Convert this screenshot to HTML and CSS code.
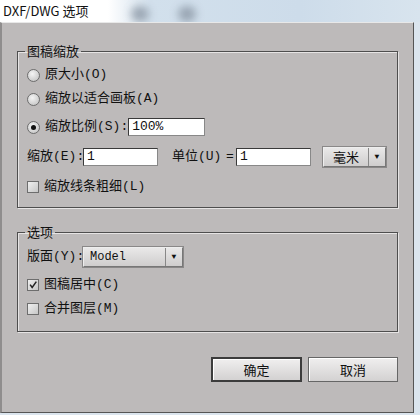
FILE: index.html
```html
<!DOCTYPE html>
<html lang="zh-CN">
<head>
    <meta charset="UTF-8" />
    <title>DXF/DWG 选项</title>
    <link rel="stylesheet" href="styles.css">
</head>
<body>
    <div class="window">
        <div class="titlebar">
            <span class="title">DXF/DWG 选项</span>
            <span class="blur blur-a"></span>
            <span class="blur blur-b"></span>
        </div>

        <div class="dialog">
            <fieldset class="group group-scale">
                <legend>图稿缩放</legend>

                <label class="row">
                    <span class="radio"></span>
                    <span>原大小(O)</span>
                </label>
                <label class="row">
                    <span class="radio"></span>
                    <span>缩放以适合画板(A)</span>
                </label>
                <label class="row row-gap">
                    <span class="radio checked"></span>
                    <span>缩放比例(S):</span>
                    <span class="field field-ratio">100%</span>
                </label>
                <div class="row row-gap-lg">
                    <span class="label-w">缩放(E):</span>
                    <span class="field field-num">1</span>
                    <span class="unit-label">单位(U)</span>
                    <span class="eq">=</span>
                    <span class="field field-num">1</span>
                    <span class="select select-unit">
                        <span class="select-text">毫米</span>
                        <span class="select-arrow">▼</span>
                    </span>
                </div>
                <label class="row row-gap-lg">
                    <span class="check"></span>
                    <span>缩放线条粗细(L)</span>
                </label>
            </fieldset>

            <fieldset class="group group-options">
                <legend>选项</legend>

                <div class="row">
                    <span class="label-w">版面(Y):</span>
                    <span class="select select-layout">
                        <span class="select-text mono">Model</span>
                        <span class="select-arrow">▼</span>
                    </span>
                </div>
                <label class="row row-gap">
                    <span class="check checked">
                        <svg width="12" height="12" viewBox="0 0 12 12">
                            <polyline points="2.5,5.5 5,9 10,2" fill="none" stroke="#222" stroke-width="1.8" />
                        </svg>
                    </span>
                    <span>图稿居中(C)</span>
                </label>
                <label class="row">
                    <span class="check"></span>
                    <span>合并图层(M)</span>
                </label>
            </fieldset>

            <div class="actions">
                <button class="btn btn-default">确定</button>
                <button class="btn">取消</button>
            </div>
        </div>
    </div>
</body>
</html>
```

FILE: styles.css
```css
:root {
    --face: #bdbaba;
    --line: #4e4e4e;
    --text: #111;
}

* {
    margin: 0;
    padding: 0;
    box-sizing: border-box;
}

body {
    width: 420px;
    height: 415px;
    overflow: hidden;
    background: #dbe5ee;
    font-family: "Liberation Mono", "Noto Sans CJK SC", monospace;
    font-size: 13px;
    color: var(--text);
}

.window {
    width: 420px;
    height: 415px;
    display: flex;
    flex-direction: column;
}

.titlebar {
    position: relative;
    height: 22px;
    display: flex;
    align-items: center;
    padding-left: 3px;
    background: linear-gradient(to right, #fff 0, #fff 108px, #d2e0ec 150px, #cddcea 300px, #d8e4ee 420px);
    overflow: hidden;
}

.title {
    font-family: "Noto Sans CJK SC", "Noto Sans", sans-serif;
    font-size: 13px;
    line-height: 16px;
    color: #111;
}

.blur {
    position: absolute;
    top: 6px;
    width: 18px;
    height: 16px;
    border-radius: 50%;
    background: #8a96a4;
    filter: blur(4px);
    opacity: 0.8;
}

.blur-a {
    left: 131px;
}

.blur-b {
    left: 178px;
}

.dialog {
    width: 414px;
    height: 391px;
    background: var(--face);
    border-left: 2px solid #8f8d8d;
    border-right: 1px solid #555;
    border-bottom: 1px solid #555;
    border-top: 1px solid #e8e8e8;
    padding: 21px 15px 0 15px;
    display: flex;
    flex-direction: column;
}

.group {
    border: 1px solid var(--line);
    box-shadow: 1px 1px 0 #e6e4e4, inset 1px 1px 0 #e6e4e4;
    padding: 5px 9px 8px 9px;
    display: flex;
    flex-direction: column;
}

.group legend {
    font-family: "Noto Sans CJK SC", sans-serif;
    font-size: 13px;
    line-height: 14px;
    padding: 0 2px;
    margin-left: -2px;
}

.group-options {
    margin-top: 17px;
    padding-top: 6px;
    padding-bottom: 10px;
}

.row {
    height: 24px;
    display: flex;
    align-items: center;
    gap: 5px;
    line-height: 16px;
    white-space: nowrap;
}

.row-gap {
    margin-top: 4px;
}

.row-gap-lg {
    margin-top: 6px;
}

.radio {
    width: 13px;
    height: 13px;
    border-radius: 50%;
    border: 1px solid #6d6d6d;
    background: radial-gradient(circle at 40% 35%, #f4f4f4, #c8c8c8 80%);
    display: flex;
    align-items: center;
    justify-content: center;
    flex-shrink: 0;
}

.radio.checked::after {
    content: '';
    width: 5px;
    height: 5px;
    border-radius: 50%;
    background: #111;
}

.check {
    width: 12px;
    height: 12px;
    border: 1px solid #6d6d6d;
    background: linear-gradient(135deg, #f0f0f0, #c6c6c6);
    display: flex;
    align-items: center;
    justify-content: center;
    flex-shrink: 0;
}

.check svg {
    display: block;
}

.field {
    height: 18px;
    background: #fff;
    border: 1px solid #3a3a3a;
    border-right-color: #888;
    border-bottom-color: #888;
    padding-left: 3px;
    display: flex;
    align-items: center;
    line-height: 16px;
}

.field-ratio {
    width: 77px;
    margin-left: -5px;
}

.field-num {
    width: 75px;
}

.label-w {
    width: 51px;
}

.unit-label {
    margin-left: 9px;
    width: 49px;
}

.eq {
    width: 6px;
    margin-right: -1px;
}

.select {
    height: 20px;
    display: flex;
    align-items: stretch;
    border: 1px solid #777;
    border-top-color: #eee;
    border-left-color: #eee;
    background: linear-gradient(#e9e8e8, #cfcdcd);
    box-shadow: 0 0 0 1px #8a8888;
}

.select-text {
    flex: 1;
    display: flex;
    align-items: center;
    padding-left: 6px;
    border-right: 1px solid #888;
}

.select-text.mono {
    font-family: "Liberation Mono", monospace;
    font-size: 12px;
}

.select-arrow {
    width: 16px;
    display: flex;
    align-items: center;
    justify-content: center;
    font-size: 8px;
    color: #111;
}

.select-unit {
    width: 63px;
    margin-left: 7px;
}

.select-unit .select-text {
    justify-content: center;
    padding-left: 0;
    font-family: "Noto Sans CJK SC", sans-serif;
}

.select-layout {
    width: 100px;
}

.actions {
    margin-top: 25px;
    display: flex;
    justify-content: flex-end;
    gap: 6px;
}

.btn {
    width: 90px;
    height: 25px;
    font-family: "Noto Sans CJK SC", sans-serif;
    font-size: 13px;
    color: #111;
    background: linear-gradient(#f0efef, #d3d1d1);
    border: 1px solid #666;
    box-shadow: inset 1px 1px 0 #fff;
    cursor: pointer;
}

.btn-default {
    width: 91px;
    border: 2px solid #3c3c3c;
}
```
